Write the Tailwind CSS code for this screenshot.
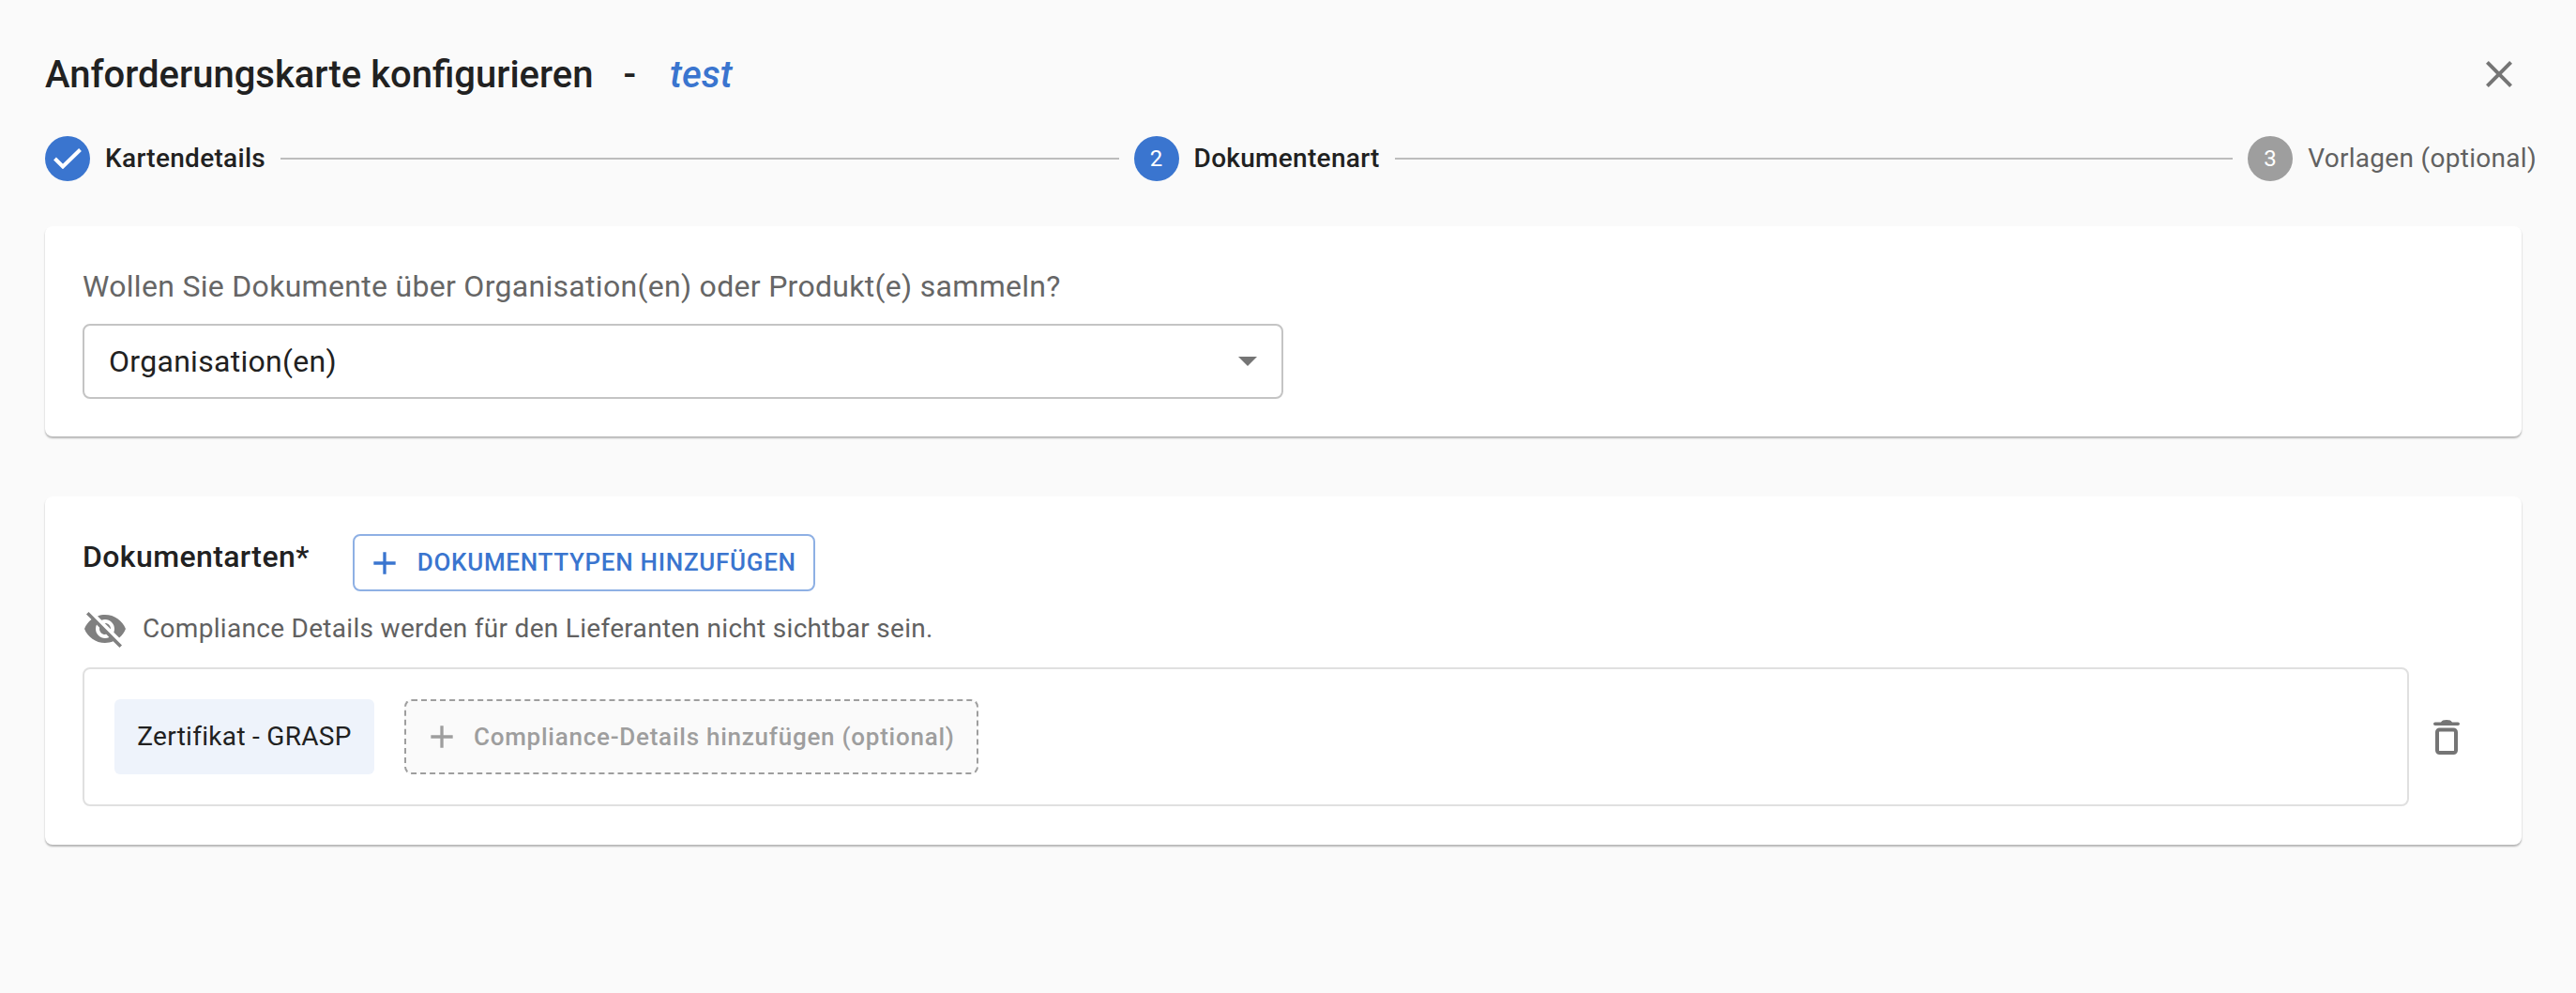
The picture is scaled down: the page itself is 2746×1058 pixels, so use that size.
<!DOCTYPE html>
<html lang="de">
<head>
  <meta charset="UTF-8">
  <title>Anforderungskarte konfigurieren</title>
  <script src="https://cdn.jsdelivr.net/npm/@tailwindcss/browser@4"></script>
</head>
<body class="bg-[#fafafa] h-[1058px] overflow-hidden font-['Roboto',sans-serif] text-[#212121]">
  <div class="pl-[48px] pr-[42px] pt-[52px]">

    <!-- Titel -->
    <div class="flex items-center h-[56px] pr-[16px]">
      <h1 class="text-[40px] leading-[56px] font-medium">Anforderungskarte konfigurieren</h1>
      <span class="text-[40px] leading-[56px] font-medium ml-[32px]">-</span>
      <span class="text-[40px] leading-[56px] font-medium italic text-[#3a75cf] ml-[36px]">test</span>
      <button class="ml-auto w-[48px] h-[48px] -mt-[2px] flex items-center justify-center text-[#757575]">
        <svg class="w-[48px] h-[48px]" viewBox="0 0 24 24" fill="currentColor"><path d="M19 6.41 17.59 5 12 10.59 6.41 5 5 6.41 10.59 12 5 17.59 6.41 19 12 13.41 17.59 19 19 17.59 13.41 12z"/></svg>
      </button>
    </div>

    <!-- Stepper -->
    <div class="flex items-center mt-[37px] h-[48px] tracking-[0.3px]">
      <div class="w-[48px] h-[48px] rounded-full bg-[#3a75cf] flex items-center justify-center shrink-0">
        <svg class="w-[30px] h-[22px] text-white" viewBox="0 0 30 22" fill="none" stroke="currentColor" stroke-width="4"><polyline points="1.5,11 10,19.5 28.5,1.5"/></svg>
      </div>
      <span class="ml-[16px] text-[28px] font-medium whitespace-nowrap">Kartendetails</span>
      <div class="flex-1 h-[2px] bg-[#bdbdbd] mx-[16px]"></div>
      <div class="w-[48px] h-[48px] rounded-full bg-[#3a75cf] flex items-center justify-center text-white text-[24px] shrink-0">2</div>
      <span class="ml-[16px] text-[28px] font-medium whitespace-nowrap">Dokumentenart</span>
      <div class="flex-1 h-[2px] bg-[#bdbdbd] mx-[16px]"></div>
      <div class="w-[48px] h-[48px] rounded-full bg-[#9e9e9e] flex items-center justify-center text-white text-[24px] shrink-0">3</div>
      <span class="ml-[16px] text-[28px] text-[#616161] whitespace-nowrap">Vorlagen (optional)</span>
    </div>

    <!-- Karte: Organisation oder Produkt -->
    <div class="w-[2640px] mt-[48px] h-[224px] bg-white rounded-[8px] shadow-[0_2px_2px_rgba(0,0,0,0.28)] px-[40px] pt-[44px]">
      <p class="text-[32px] leading-[40px] text-[#666666] tracking-[0.3px]">Wollen Sie Dokumente über Organisation(en) oder Produkt(e) sammeln?</p>
      <div class="mt-[20px] w-[1280px] h-[80px] border-2 border-[#c4c4c4] rounded-[8px] flex items-center justify-between pl-[26px] pr-[26px]">
        <span class="text-[32px] tracking-[0.3px]">Organisation(en)</span>
        <span class="w-0 h-0 border-x-[10px] border-x-transparent border-t-[10px] border-t-[#757575]"></span>
      </div>
    </div>

    <!-- Karte: Dokumentarten -->
    <div class="w-[2640px] mt-[64px] h-[371px] bg-white rounded-[8px] shadow-[0_2px_2px_rgba(0,0,0,0.28)] px-[40px] pt-[40px]">
      <div class="flex items-start">
        <span class="text-[32px] leading-[40px] font-medium tracking-[0.4px] mt-[4px]">Dokumentarten*</span>
        <button class="ml-[46px] h-[61px] w-[493px] border-2 border-[#8eb0e4] rounded-[8px] flex items-center pl-[12px] text-[#3a75cf] text-[26px] font-medium tracking-[0.7px] whitespace-nowrap">
          <svg class="w-[40px] h-[40px]" viewBox="0 0 24 24" fill="currentColor"><path d="M19 13h-6v6h-2v-6H5v-2h6V5h2v6h6z"/></svg>
          <span class="ml-[15px]">DOKUMENTTYPEN HINZUFÜGEN</span>
        </button>
      </div>
      <div class="flex items-center mt-[20px] h-[40px]">
        <svg class="w-[48px] h-[48px] text-[#808080]" viewBox="0 0 24 24" fill="currentColor"><path d="M12 7c2.76 0 5 2.24 5 5 0 .65-.13 1.26-.36 1.83l2.92 2.92c1.51-1.26 2.7-2.89 3.43-4.75-1.73-4.39-6-7.5-11-7.5-1.4 0-2.74.25-3.98.7l2.16 2.16C10.74 7.13 11.35 7 12 7zM2 4.27l2.28 2.28.46.46C3.08 8.3 1.78 10.02 1 12c1.73 4.39 6 7.5 11 7.5 1.55 0 3.03-.3 4.38-.84l.42.42L19.73 22 21 20.73 3.27 3 2 4.27zM7.53 9.8l1.55 1.55c-.05.21-.08.43-.08.65 0 1.66 1.34 3 3 3 .22 0 .44-.03.65-.08l1.55 1.55c-.67.33-1.41.53-2.2.53-2.76 0-5-2.24-5-5 0-.79.2-1.53.53-2.2zm4.31-.78 3.15 3.15.02-.16c0-1.66-1.34-3-3-3l-.17.01z"/></svg>
        <span class="ml-[16px] text-[28px] text-[#616161] tracking-[0.3px]">Compliance Details werden für den Lieferanten nicht sichtbar sein.</span>
      </div>
      <div class="flex items-center mt-[21px]">
        <div class="w-[2480px] h-[148px] border-2 border-[#e0e0e0] rounded-[8px] flex items-center pl-[32px]">
          <div class="w-[277px] h-[80px] bg-[#eef3fb] rounded-[6px] flex items-center justify-center text-[28px] tracking-[0.3px]">Zertifikat - GRASP</div>
          <div class="ml-[32px] w-[612px] h-[80px] bg-[#fafafa] border-2 border-dashed border-[#9e9e9e] rounded-[8px] flex items-center pl-[18px] text-[#9e9e9e] text-[26px] font-medium tracking-[0.75px] whitespace-nowrap">
            <svg class="w-[40px] h-[40px]" viewBox="0 0 24 24" fill="currentColor"><path d="M19 13h-6v6h-2v-6H5v-2h6V5h2v6h6z"/></svg>
            <span class="ml-[14px]">Compliance-Details hinzufügen (optional)</span>
          </div>
        </div>
        <button class="ml-[26px] w-[28px] h-[37px] flex items-center justify-center text-[#757575]">
          <svg class="w-[28px] h-[37px] shrink-0" viewBox="0 0 28 37" fill="currentColor"><path d="M8 2.5C9 .8 10.5 0 14 0s5 .8 6 2.5h6.2a1.8 1.8 0 0 1 0 3.6H1.8a1.8 1.8 0 0 1 0-3.6z"/><rect x="4" y="10.5" width="20" height="24.5" rx="2.5" fill="none" stroke="currentColor" stroke-width="4"/></svg>
        </button>
      </div>
    </div>
  </div>
</body>
</html>
